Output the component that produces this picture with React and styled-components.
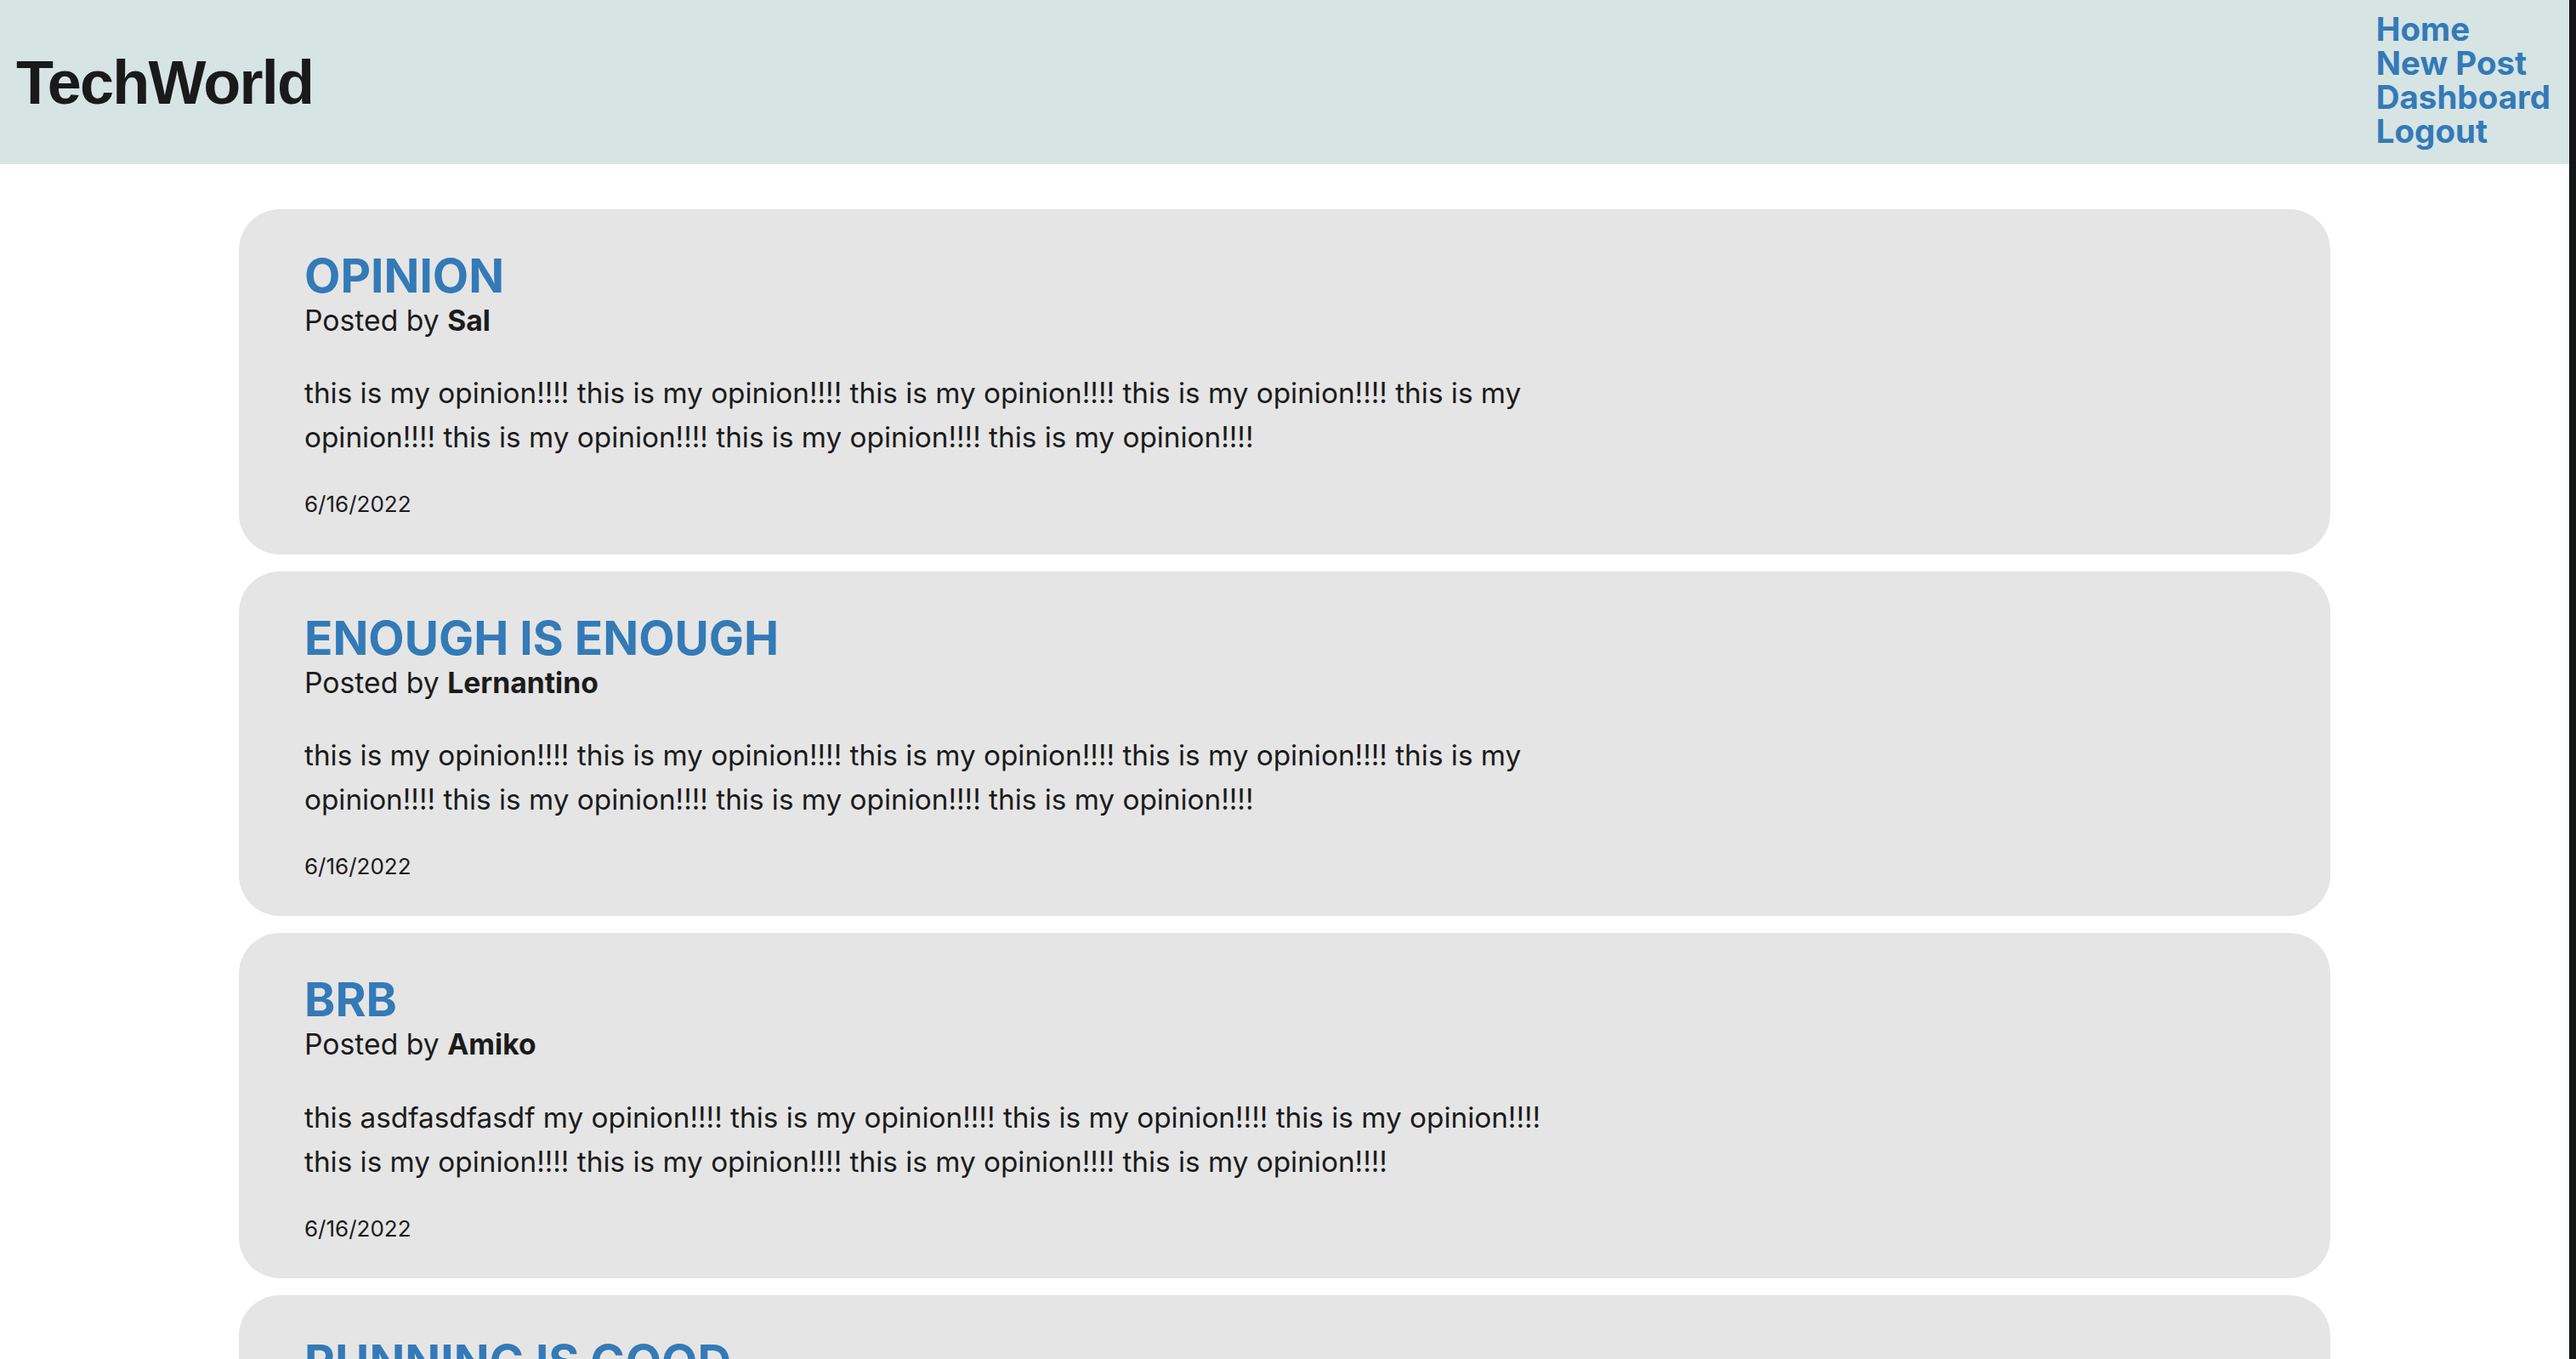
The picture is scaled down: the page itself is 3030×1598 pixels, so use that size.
import React from 'react';
import styled, { createGlobalStyle } from 'styled-components';

const GlobalStyle = createGlobalStyle`
  html, body {
    margin: 0;
    padding: 0;
    background: #ffffff;
    font-family: Inter, "Noto Sans", sans-serif;
    color: #1b1b1b;
  }
`;

const Shell = styled.div`
  display: flex;
  height: 100vh;
  overflow: hidden;
`;

const Page = styled.div`
  flex: 1;
  min-width: 0;
`;

// dark window edge on the right
const Edge = styled.div`
  width: 8px;
  flex-shrink: 0;
  background: #141516;
`;

const Header = styled.header`
  height: 193px;
  box-sizing: border-box;
  background-color: #d6e4e4;
  display: flex;
  justify-content: space-between;
  align-items: center;
  padding: 0 22px 0 19px;
`;

const Brand = styled.h1`
  margin: 0;
  font-family: "Liberation Sans", Arial, sans-serif;
  font-size: 72px;
  font-weight: bold;
  letter-spacing: -1.8px;
  color: #1a1a1a;
`;

const Nav = styled.nav`
  align-self: flex-start;
  padding-top: 14px;
  display: flex;
  flex-direction: column;
`;

const NavLink = styled.a`
  font-size: 38.5px;
  line-height: 40px;
  font-weight: 700;
  color: #337ab7;
  text-decoration: none;
`;

const Feed = styled.main`
  padding-top: 53px;
  display: flex;
  flex-direction: column;
  align-items: center;
  gap: 20px;
`;

const Card = styled.article`
  width: 2460px;
  box-sizing: border-box;
  background-color: #e5e5e5;
  border-radius: 48px;
  padding: 45px 80px 43px 77px;
`;

const Title = styled.h2`
  margin: 0;
  font-size: 55px;
  line-height: 1.2;
  font-weight: 700;
  color: #337ab7;
`;

const Byline = styled.div`
  font-size: 33.7px;
  line-height: 1.2;

  strong {
    font-weight: 700;
  }
`;

const Body = styled.p`
  margin: 39px 0 0;
  max-width: 1510px;
  font-size: 33.3px;
  line-height: 52px;
`;

const Stamp = styled.div`
  margin-top: 37px;
  font-size: 26px;
  line-height: 1.2;
`;

const opinion = 'this is my opinion!!!! ';

const posts = [
  { title: 'OPINION', author: 'Sal', body: opinion.repeat(8).trim() },
  { title: 'ENOUGH IS ENOUGH', author: 'Lernantino', body: opinion.repeat(8).trim() },
  { title: 'BRB', author: 'Amiko', body: ('this asdfasdfasdf my opinion!!!! ' + opinion.repeat(7)).trim() },
  { title: 'RUNNING IS GOOD', author: 'Sal', body: opinion.repeat(8).trim() },
];

const App = () => {
  return (
    <>
      <GlobalStyle />
      <Shell>
        <Page>
          <Header>
            <Brand>TechWorld</Brand>
            <Nav>
              <NavLink href="#">Home</NavLink>
              <NavLink href="#">New Post</NavLink>
              <NavLink href="#">Dashboard</NavLink>
              <NavLink href="#">Logout</NavLink>
            </Nav>
          </Header>
          <Feed>
            {posts.map((p) => (
              <Card key={p.title}>
                <Title>{p.title}</Title>
                <Byline>
                  Posted by <strong>{p.author}</strong>
                </Byline>
                <Body>{p.body}</Body>
                <Stamp>6/16/2022</Stamp>
              </Card>
            ))}
          </Feed>
        </Page>
        <Edge />
      </Shell>
    </>
  );
};

export default App;
